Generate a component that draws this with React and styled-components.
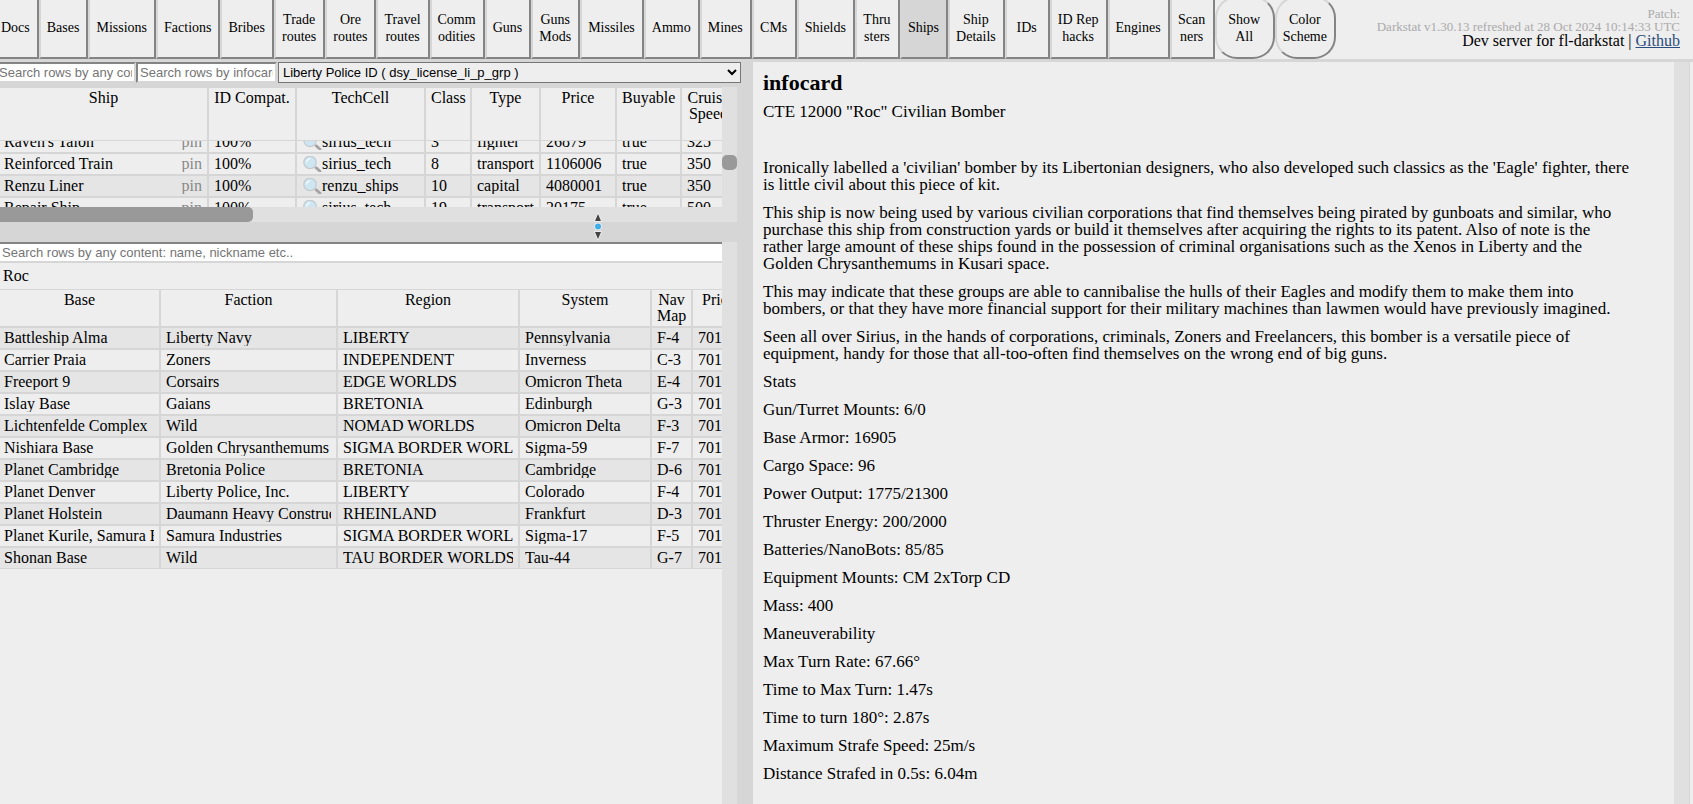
import React, { useLayoutEffect, useRef } from "react";
import styled, { createGlobalStyle } from "styled-components";

const paper = "#eeeeee";
const line = "#d6d6d6";
const stripe = "#e5e5e5";
const track = "#e0e0e0";
const edge = "#848484";

const GlobalStyle = createGlobalStyle`
  * { box-sizing: border-box; }
  body {
    margin: 0;
    background: ${paper};
    color: #000;
    font: 16px/16px "Liberation Serif", serif;
  }
`;

const Page = styled.div`
  display: flex;
  flex-direction: column;
  height: 100vh;
  overflow: hidden;
`;

const Header = styled.header`
  display: flex;
  flex: none;
  justify-content: space-between;
  height: 62px;
  border-bottom: 3px solid ${line};
  overflow: hidden;
`;

const Nav = styled.nav`
  display: flex;
  flex: none;
  height: 63px;
  margin: -4px 0 0 -7px;
`;

const Tab = styled.button`
  min-width: 45px;
  padding: 0 7px 0 6px;
  border: 2px solid;
  border-color: ${line} ${edge} ${edge} ${line};
  background: ${(p) => (p.$active ? line : paper)};
  color: #000;
  font: 14px/17px "Liberation Serif", serif;
  text-align: center;
  white-space: pre-line;
`;

const RoundTab = styled(Tab)`
  min-width: 60px;
  border-radius: 22px;
`;

const Meta = styled.div`
  padding: 7px 13px 0 0;
  text-align: right;
  white-space: nowrap;
`;

const MetaNote = styled.div`
  color: #aaa;
  font-size: 13px;
  line-height: 13px;
`;

const Link = styled.a`
  color: #2b4d7d;
`;

const Main = styled.main`
  display: grid;
  grid-template-columns: minmax(0, 753fr) minmax(0, 940fr);
  flex: 1;
  min-height: 0;
`;

const LeftPane = styled.div`
  display: flex;
  flex-direction: column;
  min-height: 0;
  padding-right: 16px;
  background: ${line};
`;

const Filters = styled.div`
  display: flex;
  flex: none;
  height: 21px;
  margin: 0 -4px 4px -5px;
`;

const Search = styled.input`
  display: block;
  width: ${(p) => (p.$wide ? "100%" : "141px")};
  height: 21px;
  padding: 1px 2px;
  border: solid;
  border-width: ${(p) => (p.$wide ? "2px 0" : "2px")};
  border-color: ${edge} ${line} ${line} ${edge};
  border-radius: 0;
  background: #fff;
  font: 13px/15px "Liberation Sans", sans-serif;
  &::placeholder { color: #757575; }
`;

const Select = styled.select`
  flex: 1;
  min-width: 0;
  height: 21px;
  margin-left: 1px;
  border: 1px solid #767676;
  border-radius: 0;
  background-color: ${paper};
  color: #000;
  font: 13px/15px "Liberation Sans", sans-serif;
`;

const Scroller = styled.section`
  display: grid;
  grid-template-columns: minmax(0, 1fr) 15px;
  grid-template-rows: minmax(0, 1fr) auto;
  min-height: 0;
  ${(p) => (p.$height ? `flex: none; height: ${p.$height}px;` : "flex: 1;")}
`;

const View = styled.div`
  min-height: 0;
  overflow: hidden;
  border-top: ${(p) => (p.$ruled ? `1px solid ${line}` : "0")};
  background: ${paper};
`;

const VTrack = styled.div`
  padding-top: ${(p) => p.$offset || 0}px;
  background: ${track};
`;

const HTrack = styled.div`
  grid-column: 1 / -1;
  height: 15px;
  background: ${track};
`;

const Thumb = styled.div`
  width: ${(p) => p.$w};
  height: 15px;
  border-radius: ${(p) => (p.$flushLeft ? "0 5px 5px 0" : "5px")};
  background: #999;
`;

const Splitter = styled.div`
  position: relative;
  flex: none;
  height: 20px;
`;

const Grip = styled.svg`
  position: absolute;
  top: -10px;
  left: 592px;
`;

const Table = styled.table`
  width: ${(p) => p.$w}px;
  border-spacing: 0;
  table-layout: fixed;
`;

const Th = styled.th`
  position: sticky;
  top: 0;
  z-index: 1;
  height: ${(p) => p.$h}px;
  padding: 2px 5px;
  border-right: 2px solid ${line};
  border-bottom: ${(p) => p.$rule}px solid ${line};
  background: ${paper};
  font-weight: normal;
  vertical-align: top;
`;

const Row = styled.tr`
  background: ${(p) => (p.$dark ? stripe : paper)};
  &:last-child td { border-bottom-width: 1px; }
`;

const Td = styled.td`
  padding: 2px 5px;
  border-right: 2px solid ${line};
  border-bottom: 2px solid ${line};
  &:first-child { padding-left: 4px; }
`;

const CellText = styled.div`
  display: flex;
  justify-content: space-between;
  height: 16px;
  overflow: hidden;
  white-space: nowrap;
`;

const Pin = styled.span`
  color: #888;
`;

const Tech = styled.span`
  display: flex;
`;

const Picked = styled.div`
  padding: 5px 3px;
  border-bottom: 1px solid ${line};
`;

const RightPane = styled.div`
  display: flex;
  min-height: 0;
  padding-right: 3px;
`;

const Card = styled.article`
  flex: 1;
  min-width: 0;
  padding: 10px 42px 0 10px;
  overflow: hidden;
  font-size: 17px;
  line-height: 17px;
`;

const Title = styled.h2`
  margin: 0 0 9px;
  font-size: 22px;
  line-height: 22px;
`;

const Para = styled.p`
  min-height: 17px;
  margin: 0 0 11px;
`;

const CardTrack = styled.div`
  flex: none;
  width: 16px;
  border-right: 1px solid ${line};
  background: ${track};
`;

const tabs = [
  "Docs", "Bases", "Missions", "Factions", "Bribes", "Trade\nroutes", "Ore\nroutes",
  "Travel\nroutes", "Comm\nodities", "Guns", "Guns\nMods", "Missiles", "Ammo", "Mines",
  "CMs", "Shields", "Thru\nsters", "Ships", "Ship\nDetails", "IDs", "ID Rep\nhacks",
  "Engines", "Scan\nners",
];

const shipColumns = [
  ["Ship", 209], ["ID Compat.", 88], ["TechCell", 129], ["Class", 46],
  ["Type", 69], ["Price", 76], ["Buyable", 65], ["Cruise Speed", 55],
];

const ships = [
  ["Raven's Talon", "100%", "sirius_tech", "3", "fighter", "26879", "true", "325"],
  ["Reinforced Train", "100%", "sirius_tech", "8", "transport", "1106006", "true", "350"],
  ["Renzu Liner", "100%", "renzu_ships", "10", "capital", "4080001", "true", "350"],
  ["Repair Ship", "100%", "sirius_tech", "19", "transport", "20175", "true", "500"],
];

const baseColumns = [
  ["Base", 161], ["Faction", 177], ["Region", 182], ["System", 132], ["Nav Map", 41], ["Price", 53],
];

const bases = [
  ["Battleship Alma", "Liberty Navy", "LIBERTY", "Pennsylvania", "F-4", "701"],
  ["Carrier Praia", "Zoners", "INDEPENDENT", "Inverness", "C-3", "701"],
  ["Freeport 9", "Corsairs", "EDGE WORLDS", "Omicron Theta", "E-4", "701"],
  ["Islay Base", "Gaians", "BRETONIA", "Edinburgh", "G-3", "701"],
  ["Lichtenfelde Complex", "Wild", "NOMAD WORLDS", "Omicron Delta", "F-3", "701"],
  ["Nishiara Base", "Golden Chrysanthemums", "SIGMA BORDER WORLDS", "Sigma-59", "F-7", "701"],
  ["Planet Cambridge", "Bretonia Police", "BRETONIA", "Cambridge", "D-6", "701"],
  ["Planet Denver", "Liberty Police, Inc.", "LIBERTY", "Colorado", "F-4", "701"],
  ["Planet Holstein", "Daumann Heavy Construction", "RHEINLAND", "Frankfurt", "D-3", "701"],
  ["Planet Kurile, Samura Base", "Samura Industries", "SIGMA BORDER WORLDS", "Sigma-17", "F-5", "701"],
  ["Shonan Base", "Wild", "TAU BORDER WORLDS", "Tau-44", "G-7", "701"],
];

const infocard = [
  'CTE 12000 "Roc" Civilian Bomber',
  "",
  "Ironically labelled a 'civilian' bomber by its Libertonian designers, who also developed such classics as the 'Eagle' fighter, there is little civil about this piece of kit.",
  "This ship is now being used by various civilian corporations that find themselves being pirated by gunboats and similar, who purchase this ship from construction yards or build it themselves after acquiring the rights to its patent. Also of note is the rather large amount of these ships found in the possession of criminal organisations such as the Xenos in Liberty and the Golden Chrysanthemums in Kusari space.",
  "This may indicate that these groups are able to cannibalise the hulls of their Eagles and modify them to make them into bombers, or that they have more financial support for their military machines than lawmen would have previously imagined.",
  "Seen all over Sirius, in the hands of corporations, criminals, Zoners and Freelancers, this bomber is a versatile piece of equipment, handy for those that all-too-often find themselves on the wrong end of big guns.",
  "Stats",
  "Gun/Turret Mounts: 6/0",
  "Base Armor: 16905",
  "Cargo Space: 96",
  "Power Output: 1775/21300",
  "Thruster Energy: 200/2000",
  "Batteries/NanoBots: 85/85",
  "Equipment Mounts: CM 2xTorp CD",
  "Mass: 400",
  "Maneuverability",
  "Max Turn Rate: 67.66°",
  "Time to Max Turn: 1.47s",
  "Time to turn 180°: 2.87s",
  "Maximum Strafe Speed: 25m/s",
  "Distance Strafed in 0.5s: 6.04m",
];

const Magnifier = () => (
  <svg width="20" height="18" viewBox="0 0 20 18" aria-hidden="true">
    <path d="M12.5 10.5L14.5 12.5" stroke="#c4c4c4" strokeWidth="1.6" />
    <path d="M14.3 11.9L18 15.2" stroke="#a4a4a4" strokeWidth="2.8" strokeLinecap="round" />
    <circle cx="8" cy="6.4" r="6.2" fill="#cde6f2" stroke="#c3cbce" strokeWidth="1.2" />
    <path d="M4.6 6Q5 3.4 7.6 2.8" stroke="#f4fbff" strokeWidth="1.3" fill="none" strokeLinecap="round" />
  </svg>
);

function DataTable({ columns, rows, headHeight, headRule, isDark, renderCell }) {
  const total = columns.reduce((sum, c) => sum + c[1], 0);
  return (
    <Table $w={total}>
      <colgroup>
        {columns.map(([name, w]) => <col key={name} width={w} />)}
      </colgroup>
      <thead>
        <tr>
          {columns.map(([name]) => (
            <Th key={name} $h={headHeight} $rule={headRule} scope="col">{name}</Th>
          ))}
        </tr>
      </thead>
      <tbody>
        {rows.map((row, i) => (
          <Row key={row[0]} $dark={isDark(i)}>
            {row.map((v, j) => (
              <Td key={j}><CellText>{renderCell ? renderCell(v, j) : v}</CellText></Td>
            ))}
          </Row>
        ))}
      </tbody>
    </Table>
  );
}

const shipCell = (v, j) => {
  if (j === 0) return <><span>{v}</span><Pin>pin</Pin></>;
  if (j === 2) return <Tech><Magnifier />{v}</Tech>;
  return v;
};

export default function App() {
  const shipView = useRef(null);
  useLayoutEffect(() => {
    shipView.current.scrollTop = 9;
  }, []);

  return (
    <Page>
      <GlobalStyle />
      <Header>
        <Nav>
          {tabs.map((t) => <Tab key={t} $active={t === "Ships"}>{t}</Tab>)}
          <RoundTab>{"Show\nAll"}</RoundTab>
          <RoundTab>{"Color\nScheme"}</RoundTab>
        </Nav>
        <Meta>
          <MetaNote>Patch:</MetaNote>
          <MetaNote>Darkstat v1.30.13 refreshed at 28 Oct 2024 10:14:33 UTC</MetaNote>
          <div>Dev server for fl-darkstat | <Link href="#github">Github</Link></div>
        </Meta>
      </Header>
      <Main>
        <LeftPane>
          <Filters>
            <Search aria-label="Search ships by content" placeholder="Search rows by any content: name, nickname etc.." />
            <Search aria-label="Search ships by infocard" placeholder="Search rows by infocard content" />
            <Select aria-label="ID" defaultValue="li_p">
              <option value="li_p">Liberty Police ID ( dsy_license_li_p_grp )</option>
            </Select>
          </Filters>
          <Scroller $height={135}>
            <View ref={shipView} $ruled>
              <DataTable
                columns={shipColumns}
                rows={ships}
                headHeight={53}
                headRule={1}
                isDark={(i) => i === 2}
                renderCell={shipCell}
              />
            </View>
            <VTrack $offset={68}><Thumb $w="15px" /></VTrack>
            <HTrack><Thumb $w="253px" $flushLeft /></HTrack>
          </Scroller>
          <Splitter>
            <Grip width="12" height="30" viewBox="0 0 12 30" aria-hidden="true">
              <g stroke="#f2f2f2" strokeWidth="1.4" paintOrder="stroke">
                <path d="M6 2L9 9H3Z" fill="#444" />
                <path d="M6 27L9 20H3Z" fill="#444" />
                <circle cx="6" cy="14.5" r="3" fill="#3daee9" />
              </g>
            </Grip>
          </Splitter>
          <Scroller>
            <View>
              <Search $wide aria-label="Search bases" placeholder="Search rows by any content: name, nickname etc.." />
              <Picked>Roc</Picked>
              <DataTable
                columns={baseColumns}
                rows={bases}
                headHeight={38}
                headRule={2}
                isDark={(i) => i % 2 === 0}
              />
            </View>
            <VTrack />
          </Scroller>
        </LeftPane>
        <RightPane>
          <Card>
            <Title>infocard</Title>
            {infocard.map((text, i) => <Para key={i}>{text}</Para>)}
          </Card>
          <CardTrack />
        </RightPane>
      </Main>
    </Page>
  );
}
